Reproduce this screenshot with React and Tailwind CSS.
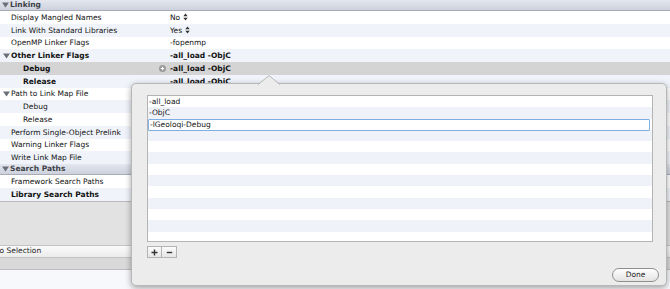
import React from "react";

const F = { fontFamily: '"DejaVu Sans", "Liberation Sans", sans-serif' };

function Tri() {
  return (
    <svg width="7" height="6" viewBox="0 0 7 6" className="shrink-0">
      <path d="M0 0.5 L7 0.5 L3.5 5.5 Z" fill="#6b6f78" />
    </svg>
  );
}

function Stepper() {
  return (
    <svg width="5" height="8" viewBox="0 0 5 8" className="ml-[3px]">
      <path d="M0.3 3.2 L2.5 0.4 L4.7 3.2 Z M0.3 4.8 L2.5 7.6 L4.7 4.8 Z" fill="#333" />
    </svg>
  );
}

function Header({ label }) {
  return (
    <div className="h-[11px] flex items-center pl-[2px] gap-[1px] bg-gradient-to-b from-[#e4e7ef] to-[#cdd1dc] border-b border-[#a9adba] text-[7.5px] font-bold text-[#3c3f47]">
      <Tri />
      <span>{label}</span>
    </div>
  );
}

function Row({ label, value, bg, bold, indent, tri, valueBold, stepper, plus }) {
  return (
    <div className={`h-[12.75px] flex items-center text-[7.5px] text-[#111] ${bg}`}>
      <div className={`w-[170px] flex items-center shrink-0 ${indent ? "pl-[23px]" : tri ? "pl-[3px]" : "pl-[11px]"} ${bold ? "font-bold" : ""}`}>
        {tri && <span className="mr-[1px] flex"><Tri /></span>}
        <span className="whitespace-nowrap">{label}</span>
        {plus && (
          <span className="ml-auto mr-[4px] w-[7px] h-[7px] rounded-full bg-[#9a9a9a] flex items-center justify-center">
            <svg width="5" height="5" viewBox="0 0 5 5">
              <path d="M2.5 0.8 V4.2 M0.8 2.5 H4.2" stroke="#fff" strokeWidth="1.1" />
            </svg>
          </span>
        )}
      </div>
      <div className={`flex items-center whitespace-nowrap ${valueBold ? "font-bold" : ""}`}>
        <span>{value}</span>
        {stepper && <Stepper />}
      </div>
    </div>
  );
}

const W = "bg-white";
const B = "bg-[#f0f4fa]";
const S = "bg-[#d4d4d4]";
const LF = "-all_load -ObjC";

export default function App() {
  const stripes = Array.from({ length: 13 });
  return (
    <div className="w-[670px] h-[289px] relative overflow-hidden bg-white" style={F}>
      <div className="flex flex-col h-full">
        <Header label="Linking" />
        <Row label="Display Mangled Names" value="No" stepper bg={W} />
        <Row label="Link With Standard Libraries" value="Yes" stepper bg={B} />
        <Row label="OpenMP Linker Flags" value="-fopenmp" bg={W} />
        <Row label="Other Linker Flags" value={LF} bold tri valueBold bg={B} />
        <Row label="Debug" value={LF} bold indent valueBold plus bg={S} />
        <Row label="Release" value={LF} bold indent valueBold bg={B} />
        <Row label="Path to Link Map File" tri bg={W} />
        <Row label="Debug" indent bg={B} />
        <Row label="Release" indent bg={W} />
        <Row label="Perform Single-Object Prelink" bg={B} />
        <Row label="Warning Linker Flags" bg={W} />
        <Row label="Write Link Map File" bg={B} />
        <Header label="Search Paths" />
        <Row label="Framework Search Paths" bg={W} />
        <Row label="Library Search Paths" bold bg={B} />
        <div className="border-t border-[#b9b9b9] h-[44px] bg-[#e2e2e2]" />
        <div className="h-[13px] bg-gradient-to-b from-[#fafafa] to-[#ececec] border-t border-b border-[#c4c4c4] flex items-center text-[7.5px] text-[#222]">
          <span className="-ml-[6px] whitespace-nowrap">No Selection</span>
        </div>
        <div className="h-[12px] bg-[#d9d9d9] border-b border-[#bdbdbd]" />
        <div className="flex-1 bg-[#f6f8fb]" />
      </div>

      {/* popover */}
      <div className="absolute left-[131px] top-[83px] w-[536px] h-[203px] rounded-[5px] bg-[#ececec] border border-[#b7b7b7] shadow-[0_2px_6px_rgba(0,0,0,0.35)]">
        <svg className="absolute left-[126px] top-[-9px]" width="22" height="10" viewBox="0 0 22 10">
          <path d="M0 10 L11 0.6 L22 10 Z" fill="#ececec" />
          <path d="M0 9.5 L11 0.6 L22 9.5" fill="none" stroke="#b7b7b7" strokeWidth="1" />
        </svg>
        <div className="absolute left-[15px] top-[11px] w-[506px] h-[147px] border border-[#b4b4b4] bg-white overflow-hidden">
          <div className="flex flex-col">
            {stripes.map((_, i) => (
              <div key={i} className={`h-[11.3px] shrink-0 ${i % 2 === 1 ? "bg-[#eff3f9]" : "bg-white"}`} />
            ))}
          </div>
          <div className="absolute inset-0 flex flex-col text-[7.5px] text-[#111]">
            <div className="h-[11.3px] flex items-center pl-[1px]">-all_load</div>
            <div className="h-[11.3px] flex items-center pl-[1px]">-ObjC</div>
            <div className="h-[12px] flex items-center pl-[1px] bg-white border-[1.5px] border-[#7eaee3] mr-[2px] rounded-[1px]">-lGeoloqi-Debug</div>
          </div>
        </div>
        <div className="absolute left-[15px] top-[162px] flex">
          <div className="w-[15px] h-[12px] border border-[#b4b4b4] bg-gradient-to-b from-[#fbfbfb] to-[#e6e6e6] flex items-center justify-center">
            <svg width="7" height="7" viewBox="0 0 7 7"><path d="M3.5 0.5 V6.5 M0.5 3.5 H6.5" stroke="#333" strokeWidth="1.4" /></svg>
          </div>
          <div className="w-[15px] h-[12px] border border-l-0 border-[#b4b4b4] bg-gradient-to-b from-[#fbfbfb] to-[#e6e6e6] flex items-center justify-center">
            <svg width="7" height="7" viewBox="0 0 7 7"><path d="M0.8 3.5 H6.2" stroke="#333" strokeWidth="1.4" /></svg>
          </div>
        </div>
        <div className="absolute right-[7px] bottom-[3px] w-[47px] h-[14px] rounded-full border border-[#8f8f8f] bg-gradient-to-b from-[#ffffff] to-[#e3e3e3] flex items-center justify-center text-[7.5px] text-[#222]">
          Done
        </div>
      </div>
    </div>
  );
}
